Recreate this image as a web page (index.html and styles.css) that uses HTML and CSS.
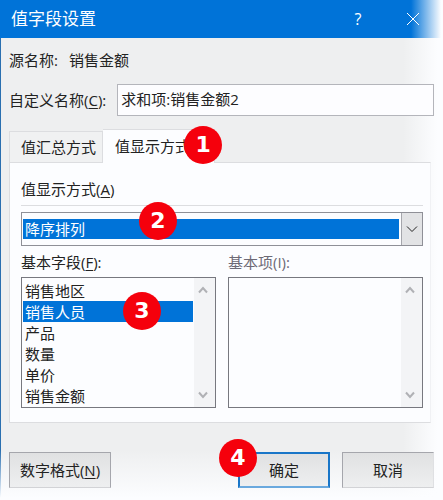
FILE: index.html
```html
<!DOCTYPE html>
<html lang="zh-CN">
<head>
  <meta charset="UTF-8">
  <meta name="viewport" content="width=device-width, initial-scale=1.0">
  <title>值字段设置</title>
  <link rel="stylesheet" href="styles.css">
</head>
<body>
  <div class="dialog">
    <header class="titlebar">
      <h1>值字段设置</h1>
      <button type="button" class="title-btn" aria-label="帮助">?</button>
      <button type="button" class="title-btn" aria-label="关闭">
        <svg width="14" height="14" viewBox="0 0 14 14"><path d="M1 1L13 13M13 1L1 13"/></svg>
      </button>
    </header>

    <form class="content">
      <p class="source"><span>源名称:</span><span>销售金额</span></p>

      <div class="name-row">
        <label for="customName">自定义名称(<u>C</u>):</label>
        <input type="text" id="customName" value="求和项:销售金额2">
      </div>

      <div class="tabs" role="tablist">
        <button type="button" class="tab" role="tab" aria-selected="false">值汇总方式</button>
        <button type="button" class="tab active" role="tab" aria-selected="true">值显示方式<span class="badge badge-tab">1</span></button>
      </div>

      <div class="panel" role="tabpanel">
        <label class="group-label" for="showAs">值显示方式(<u>A</u>)</label>

        <div class="combo">
          <select id="showAs">
            <option>降序排列</option>
          </select>
          <span class="combo-arrow">
            <svg width="12" height="8" viewBox="0 0 12 8"><path d="M1 1.5L6 6.5L11 1.5"/></svg>
          </span>
          <span class="badge badge-combo">2</span>
        </div>

        <div class="lists">
          <div class="field">
            <label for="baseField">基本字段(<u>F</u>):</label>
            <div class="listbox">
              <select id="baseField" size="6">
                <option>销售地区</option>
                <option selected>销售人员</option>
                <option>产品</option>
                <option>数量</option>
                <option>单价</option>
                <option>销售金额</option>
              </select>
              <div class="scrollbar">
                <svg width="10" height="8" viewBox="0 0 10 8"><path d="M1 6.5L5 2L9 6.5"/></svg>
                <svg width="10" height="8" viewBox="0 0 10 8"><path d="M1 1.5L5 6L9 1.5"/></svg>
              </div>
              <span class="badge badge-list">3</span>
            </div>
          </div>

          <div class="field disabled">
            <label for="baseItem">基本项(I):</label>
            <div class="listbox">
              <select id="baseItem" size="6" disabled></select>
              <div class="scrollbar">
                <svg width="10" height="8" viewBox="0 0 10 8"><path d="M1 6.5L5 2L9 6.5"/></svg>
                <svg width="10" height="8" viewBox="0 0 10 8"><path d="M1 1.5L5 6L9 1.5"/></svg>
              </div>
            </div>
          </div>
        </div>
      </div>

      <footer class="actions">
        <button type="button" class="btn btn-format">数字格式(<u>N</u>)</button>
        <button type="submit" class="btn btn-ok">确定<span class="badge badge-ok">4</span></button>
        <button type="button" class="btn btn-cancel">取消</button>
      </footer>
    </form>
  </div>
</body>
</html>
```
FILE: styles.css
```css
* {
  box-sizing: border-box;
}

body {
  margin: 0;
  background-color: #fcfdff;
  color: #222;
  font-family: "Open Sans", "Noto Sans CJK SC", sans-serif;
  font-size: 15px;
  line-height: 20px;
}

input, select, button {
  margin: 0;
  font: inherit;
  color: inherit;
}

svg {
  display: block;
  fill: none;
  stroke: currentColor;
}

u {
  text-underline-offset: 2px;
}

/* Dialog window, its right and bottom edges fade into the page */
.dialog {
  min-height: 100vh;
  background:
    linear-gradient(to top, #fcfdff 4px, rgba(252, 253, 255, 0) 52px),
    linear-gradient(to left, #fcfdff 6px, rgba(252, 253, 255, 0) 40px),
    linear-gradient(#2a6fb0, #2a6fb0) 0 0 / 1px 100% no-repeat,
    #eeeff0;
}

.titlebar {
  display: flex;
  align-items: center;
  height: 38px;
  padding: 0 23px 0 11px;
  background: linear-gradient(to left, #fcfdff 2px, rgba(0, 115, 216, 0) 32px), #0073d8;
  color: #fff;
}

.titlebar h1 {
  flex: 1;
  margin: 0;
  font-size: 17px;
  font-weight: normal;
}

.title-btn {
  display: flex;
  justify-content: center;
  width: 14px;
  margin-left: 41px;
  padding: 0;
  border: none;
  background: none;
  font-size: 16px;
}

.content {
  padding: 12px 9px 14px 9px;
}

.source {
  display: flex;
  gap: 11px;
  margin: 0 0 14px;
}

.name-row {
  display: flex;
  align-items: center;
  gap: 11px;
}

.name-row input {
  flex: 1;
  min-width: 0;
  height: 32px;
  padding: 0 3px 3px;
  border: 1px solid #b4b5bb;
  background-color: #fdfdff;
}

/* Tabs */
.tabs {
  display: flex;
  align-items: flex-end;
  margin-top: 13px;
}

.tab {
  position: relative;
  height: 31px;
  padding: 0 6px 0 11px;
  border: 1px solid #dcdde0;
  border-bottom: none;
  background-color: #f0f1f2;
}

.tab.active {
  z-index: 1;
  height: 34px;
  margin-bottom: -1px;
  padding: 0 24px 2px 12px;
  border-left: none;
  background-color: #fcfdff;
}

.panel {
  margin-right: 3px;
  padding: 16px 7px 14px 11px;
  border: 1px solid #dcdde0;
  border-right-color: #f0f1f4;
  background-color: #fcfdff;
}

.group-label {
  display: block;
  height: 27px;
  border-bottom: 1px solid #dcdde0;
}

/* Drop-down */
.combo {
  position: relative;
  display: flex;
  height: 34px;
  margin-top: 6px;
  border: 1px solid #8f9097;
}

.combo select {
  flex: 1;
  height: 20px;
  margin: 6px 2px 6px 1px;
  padding: 0 2px;
  border: none;
  border-radius: 0;
  appearance: none;
  background-color: #0073d8;
  color: #fff;
}

.combo-arrow {
  display: flex;
  align-items: center;
  justify-content: center;
  width: 21px;
  border-left: 1px solid #a5a6ac;
  background-color: #e2e3e5;
  pointer-events: none;
}

/* List boxes */
.lists {
  display: grid;
  grid-template-columns: 1fr 1fr;
  gap: 12px;
  margin-top: 6px;
}

.field label {
  display: block;
  height: 25px;
}

.field.disabled label {
  color: #6d6a76;
}

.listbox {
  position: relative;
  display: flex;
  height: 131px;
  border: 1px solid #77787f;
}

.listbox select {
  flex: 1;
  min-width: 0;
  padding: 2px 1px;
  border: none;
  border-radius: 0;
  outline: none;
  overflow: hidden;
  background-color: transparent;
}

.listbox option {
  height: 21px;
  padding: 0 2px;
  line-height: 21px;
}

.listbox option:checked {
  background: #0073d8 linear-gradient(#0073d8, #0073d8);
  color: #fff;
}

.scrollbar {
  display: flex;
  flex-direction: column;
  align-items: center;
  justify-content: space-between;
  width: 21px;
  padding: 8px 4px 8px 0;
  background-color: #f3f4f6;
  color: #b0b1b5;
}

.scrollbar svg {
  stroke-width: 2;
}

/* Buttons */
.actions {
  display: flex;
  gap: 12px;
  margin-top: 29px;
}

.btn {
  position: relative;
  width: 92px;
  height: 36px;
  padding: 0;
  border: 1px solid #a5a6ac;
  border-bottom-color: #d2d3d6;
  background: linear-gradient(#e0e1e2, #eeeff0);
}

.btn-format {
  width: 102px;
  margin-right: auto;
}

.btn-ok {
  border: 2px solid #1976c8;
  border-bottom-color: #6aa9de;
}

.btn-cancel {
  border-right-color: #dfe0e3;
}

/* Numbered step markers */
.badge {
  position: absolute;
  z-index: 2;
  width: 38px;
  height: 38px;
  border-radius: 50%;
  background-color: #f5000c;
  color: #fff;
  font: bold 22px/38px "DejaVu Sans", sans-serif;
  text-align: center;
}

.badge-tab {
  top: -4px;
  right: -8px;
}

.badge-combo {
  top: -11px;
  left: 117px;
}

.badge-list {
  top: 14px;
  left: 101px;
}

.badge-ok {
  top: -15px;
  left: -21px;
}
```
